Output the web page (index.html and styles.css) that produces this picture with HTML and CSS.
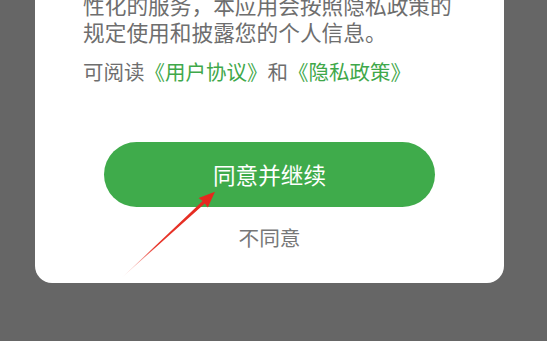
FILE: index.html
```html
<!DOCTYPE html>
<html lang="zh-CN">
<head>
<meta charset="utf-8">
<title>隐私政策</title>
<link rel="stylesheet" href="styles.css">
</head>
<body>
<div class="card">
  <p class="desc">性化的服务，本应用会按照隐私政策的<br>规定使用和披露您的个人信息。</p>
  <p class="links">可阅读<a class="link">《用户协议》</a>和<a class="link">《隐私政策》</a></p>
  <div class="actions">
    <button class="agree">同意并继续</button>
    <button class="disagree">不同意</button>
  </div>
</div>
<svg class="arrow" width="547" height="341" viewBox="0 0 547 341">
  <defs>
    <linearGradient id="g" gradientUnits="userSpaceOnUse" x1="122" y1="277" x2="215" y2="192">
      <stop offset="0" stop-color="#f4b0aa" stop-opacity="0.3"/>
      <stop offset="0.35" stop-color="#e8372c"/>
      <stop offset="1" stop-color="#e4261c"/>
    </linearGradient>
  </defs>
  <polygon fill="url(#g)" points="122,277.5 202.6,201.0 198.6,198.0 215,191.8 207.8,207.6 204.8,203.6"/>
</svg>
</body>
</html>
```
FILE: styles.css
```css
html, body {
  margin: 0;
  padding: 0;
  background: #666666;
  overflow: hidden;
  width: 547px;
  height: 341px;
}
body {
  font-family: "Noto Sans CJK SC", "Noto Sans", sans-serif;
}
.card {
  margin: -9px 0 0 35px;
  width: 469px;
  height: 292px;
  box-sizing: border-box;
  background: #ffffff;
  border-radius: 0 0 17px 17px;
  padding: 0 40px 0 48px;
  display: flex;
  flex-direction: column;
}
.desc {
  margin: 0;
  font-size: 21.7px;
  line-height: 27px;
  color: #6e6e6e;
  white-space: nowrap;
}
.links {
  margin: 13px 0 0;
  font-size: 20.5px;
  line-height: 27px;
  color: #6e6e6e;
  white-space: nowrap;
}
.link {
  color: #3fa84a;
  text-decoration: none;
}
.actions {
  display: flex;
  flex-direction: column;
  align-items: center;
  margin-left: -48px;
  margin-right: -40px;
}
.agree {
  margin-top: 57px;
  width: 331px;
  height: 65px;
  border: none;
  border-radius: 33px;
  background: #3fab4b;
  color: #ffffff;
  font-family: inherit;
  font-size: 22.6px;
  padding: 0;
}
.disagree {
  margin-top: 15px;
  border: none;
  background: none;
  color: #777777;
  font-family: inherit;
  font-size: 20.7px;
  padding: 0;
  line-height: 30px;
}
.arrow {
  position: absolute;
  left: 0;
  top: 0;
  pointer-events: none;
}
```
